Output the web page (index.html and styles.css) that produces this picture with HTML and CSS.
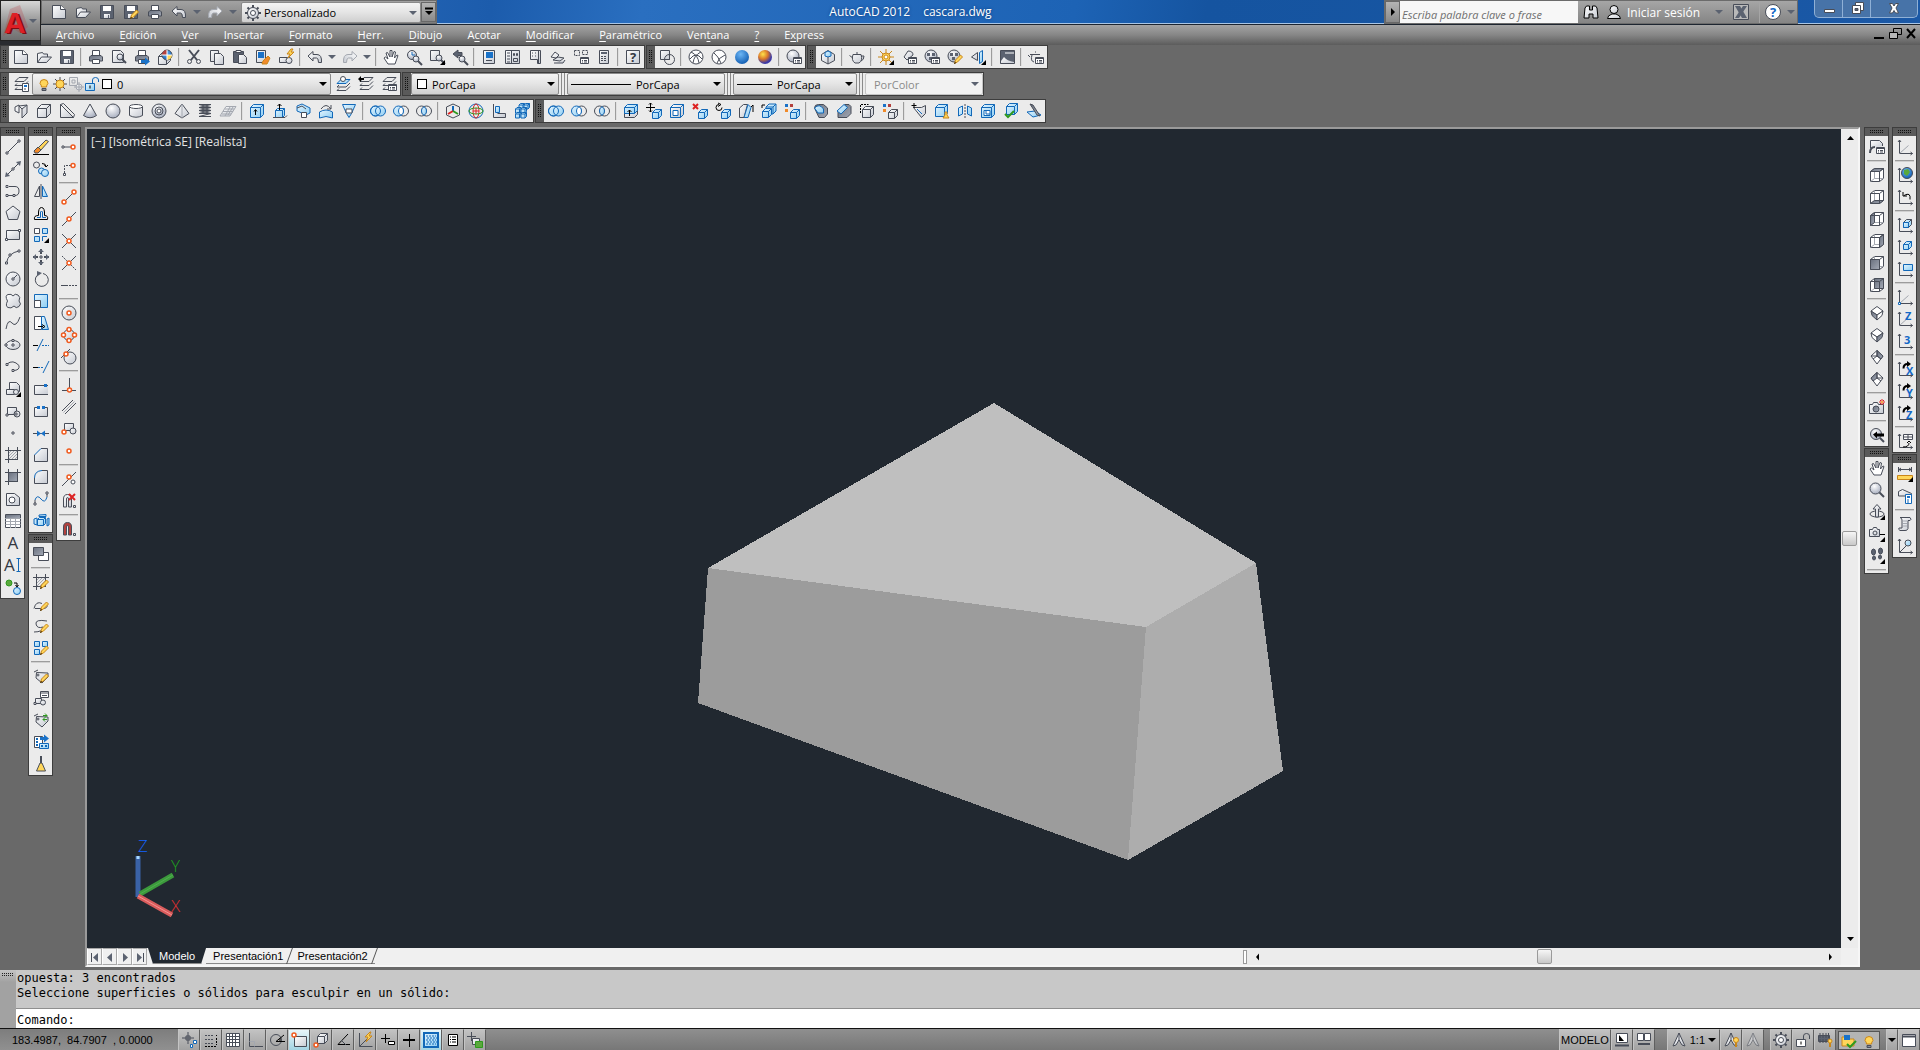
FILE: index.html
```html
<!DOCTYPE html>
<html lang="es">
<head>
  <meta charset="utf-8">
  <title>AutoCAD 2012 - cascara.dwg</title>
  <link rel="stylesheet" href="styles.css">
</head>
<body>
  <header class="top">
    <button class="app-button" aria-label="Menú de la aplicación">
      <svg class="logo" viewBox="0 0 28 38">
        <path class="logo-shade" d="M2 34l7-27 10-4 8 22-8 6-7-4z"/>
        <text class="logo-back" x="5" y="32">A</text>
        <text class="logo-front" x="3" y="31">A</text>
      </svg>
      <span data-icon="flecha"></span>
    </button>

    <div class="top-rows">
      <div class="title-bar">
        <div class="quick-access">
          <div class="tools" data-tools="nuevo abrir guardar guardarComo imprimir deshacer ^ rehacer ^"></div>
          <div class="combo workspace-combo">
            <span data-icon="engranaje"></span>
            <select aria-label="Espacio de trabajo"><option>Personalizado</option></select>
            <span data-icon="flecha"></span>
          </div>
          <button class="more" aria-label="Personalizar barra"><span data-icon="masFlecha"></span></button>
        </div>

        <h1 class="title"><span>AutoCAD 2012</span><span>cascara.dwg</span></h1>

        <div class="info-center">
          <button class="more" aria-label="Mostrar búsqueda"><span data-icon="flechaDer"></span></button>
          <input class="search" type="text" placeholder="Escriba palabra clave o frase" aria-label="Buscar">
          <button class="info-btn" aria-label="Buscar ahora"><span data-icon="prismaticos"></span></button>
          <button class="login"><span data-icon="persona"></span>Iniciar sesión<span class="push" data-icon="flecha"></span></button>
          <button class="info-btn exchange" aria-label="Exchange"><span data-icon="exchange"></span></button>
          <button class="info-btn" aria-label="Ayuda"><span data-icon="ayudaRedonda"></span></button>
          <button class="info-btn small" aria-label="Opciones de ayuda"><span data-icon="flecha"></span></button>
        </div>

        <div class="window-buttons">
          <button aria-label="Minimizar"><span data-icon="minimizar"></span></button>
          <button aria-label="Restaurar"><span data-icon="restaurar"></span></button>
          <button class="close" aria-label="Cerrar"><span data-icon="cerrar"></span></button>
        </div>
      </div>

      <nav class="menu-bar">
        <a href="#"><u>A</u>rchivo</a>
        <a href="#"><u>E</u>dición</a>
        <a href="#"><u>V</u>er</a>
        <a href="#"><u>I</u>nsertar</a>
        <a href="#"><u>F</u>ormato</a>
        <a href="#"><u>H</u>err.</a>
        <a href="#"><u>D</u>ibujo</a>
        <a href="#">A<u>c</u>otar</a>
        <a href="#"><u>M</u>odificar</a>
        <a href="#"><u>P</u>aramétrico</a>
        <a href="#">Ven<u>t</u>ana</a>
        <a href="#"><u>?</u></a>
        <a href="#">E<u>x</u>press</a>
        <div class="mdi-buttons">
          <button aria-label="Minimizar dibujo"><span data-icon="mdiMin"></span></button>
          <button aria-label="Restaurar dibujo"><span data-icon="mdiRest"></span></button>
          <button aria-label="Cerrar dibujo"><span data-icon="mdiCerrar"></span></button>
        </div>
      </nav>
    </div>
  </header>

  <div class="toolbars">
    <div class="toolbar-row">
      <div class="toolbar" data-tools="nuevo abrir guardar | imprimir vistaPrevia publicar web | cortar copiar pegar igualar editorBloques | deshacer ^ rehacer ^ | encuadre zoomReal zoomVentana zoomPrevio | propiedades designCenter paletas planos marcas calculadora | ayuda"></div>
      <div class="toolbar" data-tools="estilo2d | estructura3d oculto realista conceptual | gestionarEstilos"></div>
      <div class="toolbar" data-tools="ocultar | render | luz luces materiales mapeado espejo | entorno | ajustesRender"></div>
    </div>

    <div class="toolbar-row">
      <div class="toolbar layers" data-tools="capas">
        <div class="combo layer-combo">
          <span data-icon="bombilla"></span>
          <span data-icon="sol"></span>
          <span data-icon="ventanaCongelada"></span>
          <span data-icon="candado"></span>
          <i class="swatch"></i>
          <select aria-label="Capa actual"><option>0</option></select>
          <span data-icon="flechaNegra"></span>
        </div>
        <div class="tools" data-tools="capaActual capaPrevia estadosCapa"></div>
      </div>
      <div class="toolbar" data-tools="">
        <div class="combo color-combo">
          <i class="swatch"></i>
          <select aria-label="Color"><option>PorCapa</option></select>
          <span data-icon="flechaNegra"></span>
        </div>
        <i class="split"></i>
        <div class="combo linetype-combo">
          <i class="line"></i>
          <select aria-label="Tipo de línea"><option>PorCapa</option></select>
          <span data-icon="flechaNegra"></span>
        </div>
        <i class="split"></i>
        <div class="combo weight-combo">
          <i class="line short"></i>
          <select aria-label="Grosor de línea"><option>PorCapa</option></select>
          <span data-icon="flechaNegra"></span>
        </div>
        <i class="split"></i>
        <div class="combo plot-combo disabled">
          <select aria-label="Estilo de trazado" disabled><option>PorColor</option></select>
          <span data-icon="flecha"></span>
        </div>
      </div>
    </div>

    <div class="toolbar-row">
      <div class="toolbar" data-tools="polisolido prisma cuna cono esfera cilindro toroide piramide helice superficie | extrusion pulsarTirar barrido revolucion solevacion | union diferencia interseccion | mover3d girar3d alinear3d matriz3d"></div>
      <div class="toolbar" data-tools="union diferencia interseccion | extruirCaras moverCaras desfasarCaras borrarCaras girarCaras inclinarCaras copiarCaras colorearCaras | empalmeArista chaflanArista copiarAristas colorearAristas | estampar limpiar separar funda comprobar seccion"></div>
    </div>
  </div>

  <main class="workspace">
    <div class="dock">
      <div class="dock-column">
        <div class="toolbar vertical" data-tools="linea lineaAuxiliar polilinea poligono rectangulo arco circulo nube spline elipse arcoEliptico insertarBloque crearBloque punto sombreado degradado region tabla texto textoMultiple anadir"></div>
      </div>
      <div class="dock-column">
        <div class="toolbar vertical" data-tools="borrar copiarObjeto simetria desfase matriz desplazar girar escala estirar recortar alargar partirPunto partir juntar chaflan empalme fusionar descomponer"></div>
        <div class="toolbar vertical" data-tools="orden | editarSombreado editarPolilinea editarSpline editarMatriz | editarAtributo editarBloque sincronizar extraer pincel"></div>
      </div>
      <div class="dock-column">
        <div class="toolbar vertical" data-tools="rastreo desde | final medio interseccionRef ficticia extension | centro cuadrante tangente | perpendicular paralela insercion nodo | cercano ninguno | iman"></div>
      </div>
    </div>

    <section class="drawing">
      <div class="viewport">
        <div class="view-label">[−] [Isométrica SE] [Realista]</div>
        <svg class="model" viewBox="0 0 1754 819">
          <polygon fill="#bfbfbf" points="907,274 1169,434 1059,498 621,439"/>
          <polygon fill="#9c9c9c" points="621,439 1059,498 1041,731 611,574"/>
          <polygon fill="#adadad" points="1059,498 1169,434 1196,642 1041,731"/>
        </svg>
        <svg class="ucs" viewBox="0 0 60 90">
          <path stroke="#3a62a6" d="M11 63V22"/>
          <path stroke="#3c9a3c" d="M13 60l33-19"/>
          <path stroke="#4fae4f" stroke-width="1" d="M13 60l33-19"/>
          <path stroke="#d95c5c" d="M11 62l34 19"/>
          <path stroke="#f79090" stroke-width="1" d="M11 62l34 19"/>
          <path stroke="#a8d8ff" stroke-width="3" d="M11 22v3"/>
          <text fill="#1464ff" x="11" y="18">Z</text>
          <text fill="#1fa01f" x="44" y="38">Y</text>
          <text fill="#e03030" x="44" y="78">X</text>
        </svg>
      </div>
      <div class="scroll-v">
        <button aria-label="Desplazar arriba"><span data-icon="scrollArriba"></span></button>
        <i class="thumb"></i>
        <button aria-label="Desplazar abajo"><span data-icon="scrollAbajo"></span></button>
      </div>
      <div class="layout-strip">
        <div class="tab-nav">
          <button aria-label="Primera"><span data-icon="primera"></span></button>
          <button aria-label="Anterior"><span data-icon="anterior"></span></button>
          <button aria-label="Siguiente"><span data-icon="siguiente"></span></button>
          <button aria-label="Última"><span data-icon="ultima"></span></button>
        </div>
        <button class="tab active">Modelo</button>
        <button class="tab">Presentación1</button>
        <button class="tab">Presentación2</button>
        <div class="scroll-h">
          <i class="grip"></i>
          <button aria-label="Desplazar a la izquierda"><span data-icon="scrollIzq"></span></button>
          <i class="thumb"></i>
          <button aria-label="Desplazar a la derecha"><span data-icon="scrollDer"></span></button>
        </div>
      </div>
    </section>

    <div class="dock">
      <div class="dock-column">
        <div class="toolbar vertical" data-tools="vistas | superior inferior izquierda derecha frontal posterior | isoSO isoSE isoNE isoNO | camara | vistaAnterior"></div>
        <div class="toolbar vertical" data-tools="encuadre lupa orbita ajustarCamara paseo |"></div>
      </div>
      <div class="dock-column">
        <div class="toolbar vertical" data-tools="scp | scpUniversal scpPrevio | scpCara scpObjeto scpVista | scpOrigen scpEjeZ scp3p | scpX scpY scpZ | scpAplicar"></div>
        <div class="toolbar vertical" data-tools="distancia area | lista localizar"></div>
      </div>
    </div>
  </main>

  <section class="command">
    <div class="command-grip"></div>
    <div class="command-body">
      <div class="history">
        <p>opuesta: 3 encontrados</p>
        <p>Seleccione superficies o sólidos para esculpir en un sólido:</p>
      </div>
      <div class="prompt">
        <label for="cmd">Comando:</label>
        <input id="cmd" type="text">
      </div>
    </div>
  </section>

  <footer class="status">
    <div class="coords">183.4987,&nbsp; 84.7907 &nbsp;, 0.0000</div>
    <div class="status-group" data-tools="inferir forzcursor rejilla orto polar refent refent3d rastreoRef scpDinamico entradaDinamica grosor transparencia propiedadesRapidas ciclo" data-on="refent transparencia"></div>
    <div class="status-group right">
      <button class="wide space">MODELO</button>
      <span class="tools" data-tools="modeloHoja vistasRapidas"></span>
      <i class="gap"></i>
      <button class="wide"><span data-icon="escalaAnot"></span>1:1<span data-icon="flechaNegra"></span></button>
      <span class="tools" data-tools="visibAnot autoAnot"></span>
      <i class="gap narrow"></i>
      <span class="tools" data-tools="engranaje candadoBarra aceleracion"></span>
      <span class="tray tools" data-tools="confianza bombilla"></span>
      <button class="tiny" aria-label="Menú de la barra"><span data-icon="flechaNegra"></span></button>
      <span class="tools" data-tools="limpiarPantalla"></span>
    </div>
  </footer>

  <svg class="defs" width="0" height="0">
    <defs>
      <linearGradient id="gray" x1="0" y1="0" x2="1" y2="1"><stop offset="0" stop-color="#fff"/><stop offset="1" stop-color="#c6cad2"/></linearGradient>
      <linearGradient id="dark" x1="0" y1="0" x2="1" y2="1"><stop offset="0" stop-color="#69707e"/><stop offset="1" stop-color="#a3a9b5"/></linearGradient>
      <linearGradient id="cyan" x1="0" y1="0" x2="1" y2="1"><stop offset="0" stop-color="#e4f5ff"/><stop offset="1" stop-color="#8ecdf2"/></linearGradient>
      <radialGradient id="ball" cx=".4" cy=".3" r=".7"><stop offset="0" stop-color="#fff"/><stop offset="1" stop-color="#a9b0c0"/></radialGradient>
      <radialGradient id="blueBall" cx=".4" cy=".3" r=".7"><stop offset="0" stop-color="#6cb6f5"/><stop offset="1" stop-color="#1460b4"/></radialGradient>
      <radialGradient id="warmBall" cx=".35" cy=".3" r=".8"><stop offset="0" stop-color="#ffe24a"/><stop offset=".45" stop-color="#d8762a"/><stop offset=".8" stop-color="#3b3aa8"/></radialGradient>
    </defs>
  </svg>
  <script src="icons.js"></script>
</body>
</html>
```
FILE: styles.css
```css
*, *::before, *::after {
  box-sizing: border-box;
}

body {
  margin: 0;
  height: 100vh;
  display: flex;
  flex-direction: column;
  overflow: hidden;
  background: #696969;
  color: #000;
  font-family: "Open Sans", "Noto Sans", sans-serif;
  font-size: 11px;
}

button, select, input {
  margin: 0;
  padding: 0;
  border: 0;
  background: none;
  color: inherit;
  font: inherit;
}

button {
  display: flex;
  align-items: center;
  justify-content: center;
}

a {
  color: inherit;
  text-decoration: none;
}

.defs {
  position: absolute;
}

/* icons */
[data-icon] {
  display: flex;
}

.icon {
  display: block;
  width: 16px;
  height: 16px;
  flex: none;
  overflow: visible;
  fill: none;
  stroke: #484d58;
  stroke-width: 1;
}

.icon.slim { width: 8px; }
.icon .f { fill: url(#gray); }
.icon .g { fill: url(#dark); }
.icon .c { fill: url(#cyan); }
.icon .w { fill: #fff; }
.icon .d { fill: #5b6270; }
.icon .k { fill: #000; }
.icon .y { fill: #ffd65a; }
.icon .r { fill: #b3403c; }
.icon .bf { fill: #1a72c8; }
.icon .of { fill: #f08a2a; }
.icon .gf { fill: #5aa83c; }
.icon .s { fill: #b9b9b9; }
.icon .ball { fill: url(#ball); }
.icon .bb { fill: url(#blueBall); }
.icon .wb { fill: url(#warmBall); }
.icon .b { stroke: #1268b8; }
.icon .o { stroke: #f05a1e; stroke-width: 1.5; }
.icon .oy { stroke: #c9861a; }
.icon .rs { stroke: #d22; }
.icon .gs { stroke: #2e9a1e; }
.icon .l { stroke: #a4a8b0; }
.icon .ks { stroke: #000; }
.icon .ws { stroke: #fff; }
.icon .t { stroke-width: 2; }
.icon .n { stroke: none; }
.icon .z { fill: none; }
.icon .dash { stroke-dasharray: 2 1; }
.icon text {
  stroke: none;
  fill: #333842;
  font-family: "Open Sans", sans-serif;
  font-size: 17px;
}
.icon text.sm { font-size: 11px; font-weight: 700; }
.icon text.blue { fill: #1268c8; }
.icon text.help { font-size: 13px; font-weight: 700; }

/* title and menu */
.top {
  display: flex;
  height: 45px;
  background: #2a2c30;
}

.app-button {
  width: 41px;
  height: 41px;
  border: 1px solid #222;
  background: linear-gradient(#d6d6d6, #8d8d8d 60%, #6f6f6f);
  justify-content: flex-start;
}

.logo {
  width: 28px;
  height: 38px;
  overflow: visible;
}

.logo text {
  font: 700 30px "Liberation Sans", sans-serif;
}

.logo-shade { fill: #b5343a; opacity: .25; }
.logo-back { fill: #7d0d12; }
.logo-front { fill: #de1f26; }

.top-rows {
  flex: 1;
  display: flex;
  flex-direction: column;
}

.title-bar {
  display: flex;
  height: 25px;
  padding-bottom: 1px;
  background: linear-gradient(100deg, #1a57a5, #2768b9 14%, #1c5cac 24%, #2a6fc0 32%, #1d63b5 55%, #1554a0 62%, #1a58a6);
  border-bottom: 1px solid #1d2530;
  box-shadow: inset 0 -1px #a9c6e6;
}

.quick-access {
  display: flex;
  height: 24px;
  padding: 1px 0 1px 5px;
  background: linear-gradient(#a2a2a2, #7d7d7d);
  border: 1px solid #6b6b6b;
}

.tools {
  display: flex;
  align-items: center;
}

.quick-access .tool {
  width: 24px;
}

.quick-access .tool.slim {
  width: 12px;
}

.more {
  width: 15px;
  border: 1px solid #686868;
  background: linear-gradient(#b4b4b4, #8a8a8a);
}

.title {
  flex: 1;
  display: flex;
  justify-content: center;
  align-items: center;
  gap: 13px;
  margin: 0;
  color: #fff;
  font-size: 12px;
  font-weight: 400;
  text-shadow: 0 0 3px #0b3a78;
}

.info-center {
  display: flex;
  height: 24px;
  background: linear-gradient(#a6a6a6, #858585);
  border: 1px solid #6b6b6b;
  color: #fff;
  font-size: 12px;
}

.search {
  width: 178px;
  padding: 4px 2px 0;
  background: #f7f7f7;
  color: #444;
  font-size: 11px;
  font-style: italic;
}

.search::placeholder {
  color: #6e6e6e;
}

.info-btn {
  width: 25px;
}

.info-btn.small {
  width: 12px;
}

.login {
  width: 120px;
  justify-content: flex-start;
  gap: 5px;
  padding-left: 3px;
}

.push {
  margin-left: auto;
}

.info-btn.exchange {
  width: 37px;
  border-right: 1px solid #a5a5a5;
}

.window-buttons {
  display: flex;
  height: 18px;
  margin: 0 2px 0 16px;
  border: 1px solid #8fb0d6;
  border-top: 0;
  border-radius: 0 0 5px 5px;
  background: #4773a8;
}

.window-buttons button {
  width: 28px;
  padding-bottom: 2px;
  border-right: 1px solid #8fb0d6;
}

.window-buttons .close {
  width: 46px;
  border-right: 0;
}

.menu-bar {
  flex: 1;
  display: flex;
  align-items: center;
  gap: 25px;
  padding: 0 0 2px 15px;
  background: linear-gradient(#a4a4a4, #868686 50%, #5c5c5c);
  color: #fff;
  font-size: 11px;
}

.menu-bar u {
  text-underline-offset: 2px;
}

.mdi-buttons {
  display: flex;
  margin-left: auto;
  padding-right: 1px;
}

/* toolbars */
.toolbar-row {
  display: flex;
  gap: 1px;
  margin-bottom: 3px;
}

.toolbar {
  display: flex;
  align-items: center;
  height: 24px;
  border: 1px solid #3d3d3d;
  background: #ebebeb;
}

.toolbar::before {
  content: "";
  align-self: stretch;
  width: 8px;
  padding: 4px 2px;
  background: conic-gradient(at 1px 1px, transparent 75%, #111 0) 0 0 / 2px 2px content-box;
  background-color: #5a5a5a;
  background-clip: content-box;
  box-shadow: inset 0 0 0 4px #5a5a5a;
}

.tool {
  width: 23px;
  height: 22px;
  flex: none;
}

.tool.slim {
  width: 12px;
}

.sep {
  width: 2px;
  height: 18px;
  margin: 0 2px;
  background: #9c9c9c;
  border-right: 1px solid #e0e0e0;
}

.toolbar.vertical {
  flex-direction: column;
  width: 25px;
  height: auto;
}

.toolbar.vertical::before {
  width: auto;
  height: 8px;
  padding: 2px 5px;
}

/* solid plate behind the grip dots */
.toolbar::before,
.toolbar.vertical::before {
  box-shadow: none;
  background:
    conic-gradient(at 1px 1px, transparent 75%, #111 0) 0 0 / 2px 2px content-box content-box,
    linear-gradient(#5a5a5a, #5a5a5a) border-box;
}

.vertical .sep {
  width: 19px;
  height: 2px;
  margin: 2px 0;
  border-right: 0;
  border-bottom: 1px solid #d0d0d0;
}

/* drop-down lists */
.combo {
  display: flex;
  align-items: center;
  height: 22px;
  padding: 0 3px;
  border: 1px solid #8a8a8a;
  border-radius: 2px;
  background: linear-gradient(#f4f4f4, #e4e4e4 50%, #cfcfcf);
}

.combo select {
  flex: 1;
  min-width: 0;
  appearance: none;
}

.combo.disabled {
  background: #f2f2f2;
  border-color: #c4c4c4;
  color: #8a8a8a;
}

.combo.disabled select {
  opacity: 1;
}

.swatch {
  width: 10px;
  height: 10px;
  margin: 0 5px 0 2px;
  border: 1px solid #000;
  background: #fff;
}

.line {
  width: 60px;
  height: 1px;
  margin-right: 5px;
  background: #000;
}

.line.short {
  width: 35px;
}

.split {
  width: 4px;
  height: 22px;
  margin: 0 2px;
  border: 1px solid #8a8a8a;
  border-width: 0 1px;
}

.workspace-combo {
  width: 180px;
  height: 21px;
  margin-left: 2px;
  gap: 3px;
  font-size: 11px;
}

.layer-combo { width: 299px; }
.color-combo { width: 148px; }
.linetype-combo { width: 158px; }
.weight-combo { width: 124px; }
.plot-combo { width: 118px; padding-left: 8px; }

/* workspace */
.workspace {
  flex: 1;
  display: flex;
  min-height: 0;
  padding: 1px 3px 3px 0;
}

.dock {
  display: flex;
  gap: 3px;
}

.dock-column {
  display: flex;
  flex-direction: column;
  gap: 1px;
}

.drawing {
  flex: 1;
  display: grid;
  grid-template-columns: 1fr 17px;
  grid-template-rows: 1fr 17px;
  margin: 0 4px;
  border: 2px solid #f6f6f6;
  border-top-color: #9a9a9a;
  border-left-color: #9a9a9a;
  background: #f0f0f0;
}

.viewport {
  position: relative;
  min-height: 0;
  overflow: hidden;
  background: #212830;
}

.model {
  display: block;
  width: 100%;
  height: 100%;
  shape-rendering: crispEdges;
}

.view-label {
  position: absolute;
  top: 4px;
  left: 4px;
  color: #e4e4e4;
  font-size: 12px;
}

.ucs {
  position: absolute;
  left: 40px;
  bottom: 24px;
  width: 60px;
  height: 90px;
  fill: none;
  stroke-width: 5;
}

.ucs text {
  font: 300 17px "Open Sans", sans-serif;
}

.scroll-v {
  display: flex;
  flex-direction: column;
  align-items: center;
  background: #ececec;
}

.scroll-v button {
  height: 18px;
}

.thumb {
  width: 15px;
  height: 15px;
  border: 1px solid #9a9a9a;
  border-radius: 2px;
  background: linear-gradient(#f6f6f6, #c9c9c9);
}

.scroll-v .thumb {
  margin-top: auto;
  margin-bottom: auto;
}

.layout-strip {
  grid-column: 1 / 3;
  display: flex;
  height: 17px;
  background: #f0f0f0;
  font-family: "Liberation Sans", Arial, sans-serif;
}

.tab-nav {
  display: flex;
}

.tab-nav button {
  width: 15px;
  border: 1px solid #a8a8a8;
  border-left-color: #fff;
}

.tab {
  height: 16px;
  padding: 0 7px;
  border-bottom: 1px solid #8a8a8a;
  position: relative;
}

.tab::after {
  content: "";
  position: absolute;
  right: 0;
  top: 0;
  width: 1px;
  height: 16px;
  background: #555;
  transform: skewX(-20deg);
}

.tab.active {
  margin-left: 1px;
  padding: 0 11px;
  background: #212830;
  color: #fff;
  clip-path: polygon(0 0, 100% 0, calc(100% - 5px) 100%, 5px 100%);
}

.scroll-h {
  display: flex;
  align-items: center;
  width: 598px;
  margin-left: auto;
  margin-right: 17px;
  background: #ececec;
}

.scroll-h button {
  width: 20px;
}

.scroll-h .thumb {
  margin-left: auto;
  margin-right: auto;
}

.grip {
  width: 4px;
  height: 14px;
  border: 1px solid #9a9a9a;
  background: #fff;
}

/* command line */
.command {
  display: flex;
  height: 58px;
  background: #a2a2a2;
  font-family: "DejaVu Sans Mono", monospace;
  font-size: 12px;
  line-height: 15px;
}

.command-grip {
  width: 16px;
  padding: 3px 2px;
  background: linear-gradient(#c4c4c4, #a2a2a2 12px);
}

.command-grip::before {
  content: "";
  display: block;
  height: 4px;
  background: conic-gradient(at 1px 1px, transparent 75%, #222 0) 0 0 / 2px 2px;
}

.command-body {
  flex: 1;
  display: flex;
  flex-direction: column;
  background: #fff;
}

.history {
  height: 41px;
  padding: 1px 1px 0;
  background: #c8c8c8;
  border-bottom: 1px solid #8f8f8f;
}

.history p {
  margin: 0;
}

.prompt {
  flex: 1;
  display: flex;
  align-items: center;
  padding: 4px 1px 0;
}

.prompt input {
  flex: 1;
  outline: 0;
}

/* status bar */
.status {
  display: flex;
  height: 22px;
  border-top: 1px solid #111;
  background: linear-gradient(#8f8f8f, #777);
  font-family: "Liberation Sans", Arial, sans-serif;
}

.coords {
  width: 178px;
  padding: 5px 0 0 12px;
  background: linear-gradient(#7d7d7d, #909090);
}

.status-group {
  display: flex;
}

.status-group.right {
  margin-left: auto;
}

.status-group button {
  width: 22px;
  height: 21px;
  border: 1px solid #c4c4c4;
  border-right-color: #5f5f5f;
  border-bottom: 0;
  background: linear-gradient(#c2c2c2, #a2a2a2);
}

.status-group .on {
  background: linear-gradient(#e8f6fa, #a3d3e2);
}

.status-group .wide {
  width: auto;
  padding: 0 3px;
  gap: 3px;
}

.status-group .space {
  padding: 0 1px;
}

.status-group .tiny {
  width: 12px;
}

.gap {
  width: 12px;
}

.gap.narrow {
  width: 6px;
}

.tray {
  margin: 2px 6px 0 2px;
  background: #b4b4b4;
  border: 1px solid #555;
}

.status-group .tray button {
  width: 20px;
  height: 18px;
  border: 0;
  background: none;
}
```
FILE: icons.js
```js
// drawing helpers, all icons live on a 16x16 grid
const p = (d, c = '') => `<path class="${c}" d="${d}"/>`;
const o = (x, y, r, c = '') => `<circle class="${c}" cx="${x}" cy="${y}" r="${r}"/>`;
const e = (x, y, rx, ry, c = '') => `<ellipse class="${c}" cx="${x}" cy="${y}" rx="${rx}" ry="${ry}"/>`;
const q = (x, y, c = 'w') => p(`M${x} ${y}h2v2h-2z`, c);
const t = (x, y, s, c = '') => `<text class="${c}" x="${x}" y="${y}">${s}</text>`;
const mirror = s => `<g transform="matrix(-1 0 0 1 16 0)">${s}</g>`;
const cube = (x, y, s, d, c) =>
  p(`M${x} ${y + d}l${d}-${d}h${s}v${s}l-${d} ${d}h-${s}z`, c) +
  p(`M${x} ${y + d}h${s}v${s}m0-${s}l${d}-${d}`, c + ' z');

const pencil = p('M7.5 14.5l1-3.5 5-5 2 2-5 5z', 'y oy') + p('M7 15l1-2 1 1z', 'k n');
const fly = p('M16 11v5h-5z', 'k n');
const list = p('M7.5 8.5h8v6h-8z', 'w') + p('M7.5 9.5h8M9 11.5h1M11 11.5h3M9 13h1M11 13h3');
const blueSmall = cube(6.5, 6.5, 6, 3, 'c b');
const node = (x, y) => o(x, y, 2, 'w o');
const axes = p('M2.5 1v13.5h13M1 3l1.5-2L4 3M13.5 13l2 1.5-2 1.5') + p('M2.5 14.5l9-8', 'l');
const axesBare = p('M2.5 1v13.5h13M1 3l1.5-2L4 3M13.5 13l2 1.5-2 1.5');
const turn = p('M6.5 7.5q0-4.5 4-4.5', 'ks t') + p('M10 0l4 3-4 3z', 'k n');
const magnet = c => p('M2.5 14V6q0-4.5 4-4.5t4 4.5v8h-3V6q0-1.5-1-1.5T5.5 6v8z', c) + p('M12.5 12.5h2v2h-2z');
const layers = p('M2 5.5l4-4h9l-4 4zM2 9.5l2-2M2 9.5h9l4-4M2 13.5l2-2M2 13.5h9l4-4');
const tag = p('M1 4l4-2M3.5 4.5L15 5v4l-6 6-6-5z', 'f') + o(5, 7, 1);
const page = p('M1.5 1.5h8.5l4.5 4v9h-13z', 'f') + p('M9.5 1.5v4h5', 'w');
const save = p('M1.5 1.5h13v13h-13z', 'd') + p('M4 2h8v5H4z', 'w n') + p('M5 10h6v4H5z', 'f n') + p('M9 11h1v3H9z', 'd n');
const printer = p('M4.5 6V1.5h7V6', 'w') + p('M3 6.5h10l1.5 1.5v4h-13V8z', 'g') + p('M4.5 10.5h7v4h-7z', 'w');
const back = 'M1 7l5-4.500v3h4q5 0 4.500 8h-3q0-4.500-2-4.500H6v3z';
const iso = (a, b, c) => p('M8 1.5l6 4.5-6 4-6-4z', a) + p('M2 6l6 4v5L3 10.5z', b) + p('M14 6l-6 4v5l5-4.5z', c);
const view = face => p('M1.5 4.5l4-3h9v10l-4 3h-9z', 'w') + p('M5.5 1.5v10h9M5.5 11.5l-4 3', 'l') + face + p('M1.5 4.5h9v10m0-10l4-3', 'z');
const zoomGlass = (x, y) => p(`M${x + 2} ${y + 2}l4 4`, 't') + o(x, y, 3, 'ball');
const grid4 = c => [[1.5, 1.5], [9.5, 1.5], [1.5, 9.5]].map(([x, y]) => p(`M${x} ${y}h5v5h-5z`, c)).join('');
const annot = c => p('M8 1L2 14l3-1 3-5 3 5 3 1z', c) + p('M8 1v8');
const hatch = p('M3.5 0v16M12.5 0v13M0 3.5h16M0 12.5h13');
const stripes = p('M4 6l2-2M4 9l5-5M4 12l8-8M7 12l5-5M10 12l2-2', 'l');
const dots = p('M1 1h3v3H1z', 'bf n') + p('M6 1h3v3H6z', 'r n') + p('M1 6h3v3H1z', 'of n');

const icons = {
  nuevo: page,
  abrir: p('M1.5 13.5v-9l5-1 1 1.5h4v3', 'f') + p('M1.5 13.5l4-5.5h10l-5 5.5z', 'f'),
  guardar: save,
  guardarComo: save + pencil,
  imprimir: printer,
  deshacer: p(back, 'f'),
  rehacer: mirror(p(back, 'f l')),
  vistaPrevia: p('M1.5 1.5h8l3 3v9h-11z', 'f') + zoomGlass(9, 8),
  publicar: printer + p('M7 11h4V8.5l5 4-5 4V14H7z', 'bf n'),
  web: cube(1.5, 3.5, 8, 4, 'f') + o(10, 6, 5, 'bb') + p('M10 1a5 5 0 0 0-5 5h5z', 'r n') + p('M10 6h5a5 5 0 0 1-5 5z', 'y n') + p('M10 1v10M5 6h10', 'ws'),
  cortar: p('M3 1l8 10M13 1L5 11', 't') + o(3.5, 12.5, 2) + o(12.5, 12.5, 2),
  copiar: p('M1.5 1.5h8v11h-8z', 'f') + p('M5.5 4.5h6l3 3v8h-9z', 'f'),
  pegar: p('M1.5 2.5h10v11h-10z', 'd') + p('M4 1.5h5v2H4z', 'w') + p('M6.5 5.5h5l3 3v6h-8z', 'f'),
  igualar: p('M1.5 1.5h9v12h-9z', 'f') + p('M3 3h6v6H3z', 'bf n') + p('M8 12l5-5 2 2-3 6-5 0z', 'of oy'),
  editorBloques: p('M1.5 8.5h8v5h-8z', 'f') + o(11, 11.5, 3, 'f') + p('M13 0l-4 5h3l-2 4 6-6h-3l2-3z', 'y oy'),
  encuadre: p('M5 15L1 9l1.5-1L5 10 3 4l1.5-.5L7 8V1.5h2V8l2-5.5 1.5.5-1 6 2.5-3 1 .5-3 8.500z', 'w'),
  zoomReal: o(6, 6, 4.5, 'ball') + p('M6 3v3h3', 'b') + zoomGlass(10, 10),
  zoomVentana: p('M1.5 1.5h9v10h-9z', 'f') + zoomGlass(10, 9) + fly,
  zoomPrevio: p('M1 5l5-4v2.5h4v3H6V9z', 'd') + zoomGlass(10, 10),
  propiedades: p('M2.5 1.5h11v13h-11z', 'f') + p('M5 3h7v6H5z', 'bf n') + p('M5 11.5h6'),
  designCenter: p('M1.5 1.5h14v13h-14z', 'f') + p('M3 4h3M3 7h3M3 10h3M3 13h3M7.5 1.5v13') + p('M9.5 4.5h1v2h-1zM12.5 4.5h1v2h-1zM9.5 9.5h4v3h-4z'),
  paletas: p('M3.5 1.5h10v13h-3v-4h-7z', 'f') + p('M5 4h1M8 4h1M5 7h1M8 7h1M11.5 2v12'),
  planos: p('M1 8l4-5 4 3-3 3zM3 11l5-3 6 1-4 3zM4 14h9l2-3', 'f'),
  marcas: p('M1.5 1.5h5v5h-5zM9.5 1.5h5v4h-5z', 'dash') + list,
  calculadora: p('M3.5 1.5h9v13h-9z', 'f') + p('M5 3h6v2H5z', 'd n') + p('M5 7.5h6M5 9.5h6M5 11.5h6', 'dash'),
  ayuda: p('M1.5 1.5h13v13h-13z', 'f') + t(5, 13, '?', 'help'),
  estilo2d: p('M1.5 1.5h9v9h-9z', 'f') + o(10.5, 10.5, 5) + p('M5.5 10.5h5v-5'),
  estructura3d: o(8, 8, 7, 'w') + p('M3 3q7 3 8 11M13 3Q6 6 5 14M2 10Q8 2 14 10'),
  oculto: o(8, 8, 7, 'w') + p('M3 4q4 3 7 10M14 6Q7 9 6 14'),
  realista: o(8, 8, 7, 'bb n'),
  conceptual: o(8, 8, 7, 'wb n'),
  gestionarEstilos: o(7, 7, 6, 'ball') + list,
  ocultar: p('M8 1.5l6.5 4v6L8 15l-6.5-3.5v-6z', 'f') + p('M5 3.5L8 2l3 1.5V7L8 8 5 7z', 'c b') + p('M8 8v7'),
  render: p('M4 5.5h8q2 6-2 8.5H6Q2 11.5 4 5.5zM4 9L.5 6.500M12 7h3q0 4-3 5M7 4h2', 'f'),
  luz: p('M8 0v16M0 8h16M2 2l12 12M14 2L2 14', 'oy') + o(8, 8, 4, 'y oy') + o(8, 8, 2, 'w oy') + fly,
  luces: p('M3 8l4-6q5 0 5 4l-6 5z', 'f') + list,
  materiales: o(7, 7, 6, 'ball') + p('M3 4h3v3H3zM8 4h3v3H8zM5 8h3v3H5z', 'd n') + list,
  mapeado: o(7, 7, 6, 'ball') + p('M3 4h3v3H3zM8 4h3v3H8zM5 8h3v3H5z', 'd n') + pencil,
  espejo: p('M7.5 3.5v8L1.5 8z', 'f') + p('M9.5 3.5l3-2v11l-3 2z', 'c b') + fly,
  entorno: p('M1.5 1.5h14v13h-14z', 'd') + p('M2 12l3-4q3 4 10 5v1H2z', 'f n') + p('M6 4h9', 'ws'),
  ajustesRender: p('M2 5.5h10M4 6q-2 6 2 7M2 8L0 6M7 3h1', 'f') + list,
  capas: layers + p('M9.5 7.5h6v8h-6z', 'w') + p('M11 9h3v2h-3z', 'bf n') + p('M11 13h3', 'dash'),
  capaActual: p('M2 7.5l4-4h9l-4 4z', 'c b') + p('M2 11l2-2M2 11h9l4-4M2 14.5l2-2M2 14.5h9l4-4') + o(8, 3, 2.5, 'w'),
  capaPrevia: layers + p('M0 3l3-3v2h3v2H3v2z', 'k n'),
  estadosCapa: layers + list,
  bombilla: p('M5.5 11q0-2-1.5-3.5a4 4 0 1 1 8 0Q10.5 9 10.5 11z', 'y oy') + p('M6 12.5h4v2H6z', 'g'),
  sol: p('M8 1v14M1 8h14M3 3l10 10M13 3L3 13') + o(8, 8, 4, 'y oy'),
  ventanaCongelada: p('M1.5 1.5h8v8h-8zM4 4h3v3H4z', 'l') + o(11, 11, 3, 'l f') + p('M11 6v10M6 11h10', 'l'),
  candado: p('M1.5 7.5h9v7h-9z', 'c b') + p('M8.5 7V4q0-2.5 3-2.5t3 2.5v2', 'b') + p('M6 9.5v3', 'ks'),
  polisolido: p('M2 4l4-2v8l-4-2zM6 3l8-1v8l-5 5V6z', 'f') + p('M6 3l3 3 5-4'),
  prisma: cube(1.5, 1.5, 9, 4, 'f'),
  cuna: p('M1.5 1.5v13h13z', 'f') + p('M1.5 1.5l3-1 11 11-1 3'),
  cono: p('M8 1l6.5 11.5Q8 17 1.5 12.5z', 'ball'),
  esfera: o(8, 8, 7, 'ball'),
  cilindro: p('M1.5 3.5v9q6.5 3.5 13 0v-9', 'f') + e(8, 3.5, 6.5, 2, 'w'),
  toroide: o(8, 8, 7, 'ball') + o(8, 8, 4, 'ball') + o(8, 8, 2, 'w'),
  piramide: p('M8 1l7 9.5L8 15l-7-4.500z', 'f') + p('M8 1v14', 'l'),
  helice: p('M2 1.5h12L2 4.5h12L2 7.5h12L2 10.5h12l-12 3h12M2 1.5l12 3M2 4.5l12 3M2 7.5l12 3'),
  superficie: p('M6 3.5h10L10 13H0z', 'f l') + p('M3 8.500h10M10 4l-5 9M13 4L8 12M5 6h9M2 11h9', 'l'),
  extrusion: cube(1.5, 1.5, 10, 3, 'c b') + p('M6.5 12V7M5 8.5l1.5-2L8 8.5', 'ks'),
  pulsarTirar: cube(3.5, 5.5, 7, 2, 'c b') + p('M7.5 7V1M5.500 3l2-2 2 2', 'ks') + p('M1 14.5h12l2-2'),
  barrido: p('M2 3l5-2 8 4v5l-4 2-4-2-5-2z', 'c b') + p('M6.5 9.5h5v5h-5z', 'w') + p('M2 5l5-2 4 3'),
  revolucion: p('M1.5 9q6.5-4 13 0v6q-6.5-3-13 0z', 'c b') + p('M3 6q5-7 10 0M13 2v4H9'),
  solevacion: p('M1.5 1.5h13l-4 9-2.5 4-2.5-4z', 'c b') + p('M5 6h6v4H5z', 'w'),
  union: o(5.5, 8, 5, 'c b') + o(10.5, 8, 5, 'c b') + o(5.5, 8, 5, 'b'),
  diferencia: o(10.5, 8, 5) + o(5.5, 8, 5, 'c b') + p('M8 3.7a5 5 0 0 0 0 8.600 5 5 0 0 0 0-8.600z', 'w b'),
  interseccion: o(5.5, 8, 5) + o(10.5, 8, 5) + p('M8 3.7a5 5 0 0 0 0 8.600 5 5 0 0 0 0-8.600z', 'c b'),
  mover3d: p('M8 1l6.5 3v8L8 15l-6.5-3V4z') + p('M8 8V3', 'b t') + p('M8 8l-5 3', 'rs t') + p('M8 8l5 3', 'gs t'),
  girar3d: o(8, 8, 7, 'b') + e(8, 8, 3, 7, 'rs') + e(8, 8, 7, 3, 'gs') + p('M8 5v6M5 8h6', 'rs'),
  alinear3d: p('M2.5 1v13.5h12v-4h-8', 'f') + p('M4.5 3.5h4v6h-4z', 'c b'),
  matriz3d: cube(5, .5, 4, 1.5, 'c b') + cube(10, .5, 4, 1.5, 'c b') + cube(1.5, 4.5, 4, 1.5, 'c b') + cube(7, 4.5, 4, 1.5, 'c b') + cube(1.5, 9.5, 4, 1.5, 'c b') + cube(7, 9.5, 4, 1.5, 'c b'),
  extruirCaras: p('M1.5 10v4.5h10l3-3V7', 'f') + p('M1.5 4.5l3-3h10v6l-3 3h-10z', 'c b') + p('M1.5 4.5h10v6m0-6l3-3', 'b') + p('M6.5 13V7M4.5 9l2-2 2 2', 'ks'),
  moverCaras: p('M4.5 0v9M0 4.500h9M3 1.500L4.500 0 6 1.500M3 7.500L4.500 9 6 7.500', 'ks') + blueSmall,
  desfasarCaras: cube(1.5, 1.5, 10, 3, 'f b') + p('M4 7.5h5v5H4z', 'w b'),
  borrarCaras: p('M1 1l5 5M6 1L1 6', 'rs t') + blueSmall,
  girarCaras: p('M4 1.500a3 3 0 1 0 3 3M3 0l3 1.500-3 2', 'ks') + blueSmall,
  inclinarCaras: p('M1.5 14.5V5l4-3.5h4L6 14.5z', 'f') + p('M6 14.5l4-13 3 3-3 10z', 'c b') + p('M15 9V2M13 4l2-2', 'ks'),
  copiarCaras: cube(5, 1, 7, 3, 'c b') + cube(1.5, 5.5, 6, 3, 'c b') + p('M1 5V2h3', 'ks'),
  colorearCaras: dots + blueSmall,
  empalmeArista: p('M1.5 5q0-3.500 4-3.500h5l4 3.500v6l-3 3.5H6z', 'g') + p('M1.500 5q5-5 9 1v4H5z', 'c b'),
  chaflanArista: p('M2 8l7-6.500h4l2 2v7l-4 4H2z', 'g') + p('M1 8l7-6.500 3.500 3L5 11z', 'c b'),
  copiarAristas: cube(3.5, 3.5, 8, 3, 'f') + p('M1.5 10V1.5h8', 'dash ks'),
  colorearAristas: dots + cube(6.5, 6.5, 6, 3, 'f'),
  estampar: p('M2.5 4.5h8l4-2v8l-4 4z', 'f') + p('M3 0v5M.5 2.5h5', 'ks') + p('M6 6l5 5', 'b'),
  limpiar: cube(1.5, 1.5, 9, 3, 'c b') + p('M11 9h2v3l2 3H9l2-3z', 'y oy'),
  separar: p('M1.5 5l4-2v8l-4 2zM14.5 5l-4-2v8l4 2z', 'c b') + p('M8 1v14', 'dash'),
  funda: cube(1.5, 1.5, 10, 3, 'c b') + p('M4 7.5h6v5H4z', 'w b') + p('M6 8v3h4', 'b'),
  comprobar: cube(3.5, .5, 8, 3, 'c b') + p('M2 11l3 3 6-6', 'gs t'),
  seccion: p('M1 9l8-1 6 4-8 2z', 'c b') + p('M4 1l3 1 7 11-3-1z', 'g'),
  linea: p('M2 14L14 2') + q(1, 13) + q(13, 1),
  lineaAuxiliar: p('M2 14L14 2') + p('M0 16l1-5 4 4zM16 0l-5 1 4 4z', 'd n') + q(7, 7),
  polilinea: p('M2 12.5h7M4 3.5h6q4 0 4 4.5t-4 4.5') + q(1, 11.5) + q(8, 11.5) + q(1, 2.5),
  poligono: p('M8 1l7 5.5-2.5 8h-9L1 6.5z', 'f'),
  rectangulo: p('M1.5 3.5h13v9h-13z', 'f') + q(.5, 11.5) + q(13.5, 2.5),
  arco: p('M1.5 14Q3 4 14 2') + q(.5, 13) + q(4, 5) + q(13, 1),
  circulo: o(8, 8, 7, 'f') + p('M8 8l4-4') + q(7, 7),
  nube: p('M2.500 8Q-.5 2.500 3 1.500T8 3q2-3 5-1t1 6q3 3 0 5.500T9 13q-3 3-6 1.500T2.500 8z', 'f'),
  spline: p('M1 14Q3 3 7 8t8-6'),
  elipse: e(8, 8, 7, 4.5, 'f') + q(7, 2.5) + q(0, 7) + q(7, 7),
  arcoEliptico: p('M2 5q6-5 12 1.5 1 5-6 5') + q(1, 4.5) + q(7, 10.5),
  insertarBloque: p('M4.5 1.5h7l3 3v6h-10z', 'f') + p('M1.5 8.5h8v5h-8z', 'f') + o(11, 11, 2.5, 'f') + fly,
  crearBloque: p('M2.5 4.5h9v7h-9z', 'f') + o(12, 11, 3, 'f') + q(1, 11) + q(10, 10),
  punto: q(7, 7),
  sombreado: stripes + hatch,
  degradado: p('M3.5 3.5h9v9h-9z', 'g') + hatch,
  region: p('M1.5 2.5h8l5 4v8h-13z', 'f') + o(7, 9, 3, 'w'),
  tabla: p('M.5 1.5h15v13H.5z', 'w') + p('M1 2h14v3H1z', 'g n') + p('M0 5.500h16M.5 8.5h15M.5 11.5h15M5.5 5v10M10.500 5v10', 'l'),
  texto: t(2.5, 14, 'A'),
  textoMultiple: t(-1, 14, 'A') + p('M13.5 1.5v13M11.5 1.5h4M11.5 14.5h4', 'b'),
  anadir: o(4, 4, 3, 'gf gs') + o(12, 12, 3.5, 'c b') + p('M9 4h3v3M10.5 6L12 8l1.5-2', 'ks'),
  borrar: p('M5 9l8-8 2.500 1.500-8 9z', 'y') + p('M1 12l4-4 3 3-3 3H2z', 'of') + p('M0 15.5h16', 'ks'),
  copiarObjeto: o(3.5, 4, 3) + o(8.5, 10, 3, 'c b') + o(12, 12, 3.5, 'c b') + p('M9 2.5q4 0 4 3M11.5 4l1.5 2 2-2', 'ks'),
  simetria: p('M6.5 3v10.5h-5z') + p('M9.5 3v10.5h5z', 'c b') + p('M8 1v15'),
  desfase: p('M1.5 14.5q-1-4 4-4Q5 2.5 8.500 2.500t3 8q4 0 3 4z', 'ks') + p('M4 12.500h3.500V7q1-2 2 0v5.500H13', 'b'),
  matriz: p('M1.5 1.5h5v5h-5z', 'w') + p('M9.5 1.5h5v5h-5zM1.5 9.5h5v5h-5z', 'c b') + p('M9.5 14V9.5H14', 'b') + fly,
  desplazar: p('M8 0v5M8 11v5M0 8h5M11 8h5', 't') + p('M5 3l3-3 3 3zM5 13l3 3 3-3zM3 5L0 8l3 3zM13 5l3 3-3 3z', 'd n') + p('M7 7h2v2H7z'),
  girar: p('M10 2.5a6.500 6.500 0 1 1-6 2') + p('M4 0l5 2-5 3.500z', 'd n'),
  escala: p('M1.5 1.5h13v13h-13z', 'c b') + p('M1.5 7.5h6v7h-6z', 'w'),
  estirar: p('M1.5 1.5h7v13h-7z', 'w') + p('M8.5 1.5h3l4 13h-7z', 'c b') + p('M5 11.5h5M9 9.5l3 2-3 2', 'ks'),
  recortar: p('M0 8.5h5', 'ks') + p('M9 8.5h7', 'b dash') + p('M4 14L10 2', 'b'),
  alargar: p('M0 8.5h5', 'ks') + p('M5 8.5h5', 'b dash') + p('M10 14l6-12', 'b'),
  partirPunto: p('M15 4.5H1.5v9H15', 'f') + p('M11 3h3v3h-3z', 'bf n'),
  partir: p('M4 4.5H1.5v9h13v-9H12', 'f') + p('M4 3h3v3H4zM9 3h3v3H9z', 'bf n'),
  juntar: p('M0 8.5h16') + p('M4 5.5l4 3-4 3zM12 5.5l-4 3 4 3z', 'bf n'),
  chaflan: p('M1.5 8v6.5h13v-13H8', 'f') + p('M1.5 8L8 1.5', 'b'),
  empalme: p('M1.5 9v5.5h13v-13H9', 'f') + p('M1.5 9q0-7 7.5-7.5', 'b'),
  fusionar: p('M2 13V9M14 2v4') + p('M2 9q2-6 6-1t6-2', 'b') + q(1, 12) + q(13, 1),
  descomponer: cube(4.5, 4.5, 6, 2, 'c b') + p('M1 6l3-1v7l-3-1zM6 2l7-.5v2H6zM14 6l2-1v7l-2 1z', 'c b'),
  orden: p('M5.5 6.5h10v8h-10z', 'w') + p('M.5 1.5h10v8H.5z', 'g'),
  editarSombreado: stripes + hatch + pencil,
  editarPolilinea: p('M1 12.5q2-8 8-5M2 12.5h9q5-1 2-5', '') + pencil,
  editarSpline: p('M14 3Q2 1 3 6t7 3q0 5-9 5') + pencil,
  editarMatriz: grid4('c b') + pencil,
  editarAtributo: tag + pencil,
  editarBloque: p('M7.5 1.5h8v6h-8z', 'w') + p('M8 3h7M9 5.5h5') + p('M2.5 8.5h6v5h-6z', 'f') + o(10, 12.5, 2.5, 'f') + q(1, 12.5),
  sincronizar: tag + p('M10 3.5h4M12 1.5l2 2-2 2M14 7.5h-4M12 5.5l-2 2 2 2', 'gs'),
  extraer: p('M1.5 2.5h8v11h-8z', 'w') + p('M3 5h2M3 8h2M3 11h2', 'b t') + p('M7 3h4V.5l5 4-5 4V6H7z', 'bf n') + p('M6.5 9.5h9v5h-9z', 'c b') + p('M8 12h2M12 12h2', 'b t'),
  pincel: p('M8 0v7', 't') + p('M7 7h2l3.5 8h-9z', 'y'),
  rastreo: p('M2 8h8') + q(1, 7) + node(12, 8),
  desde: p('M3.5 12V4.5H10', 'dash') + q(2.5, 12.5) + node(12, 4.5),
  final: p('M3 13L13 3') + node(3, 13) + node(13, 3),
  medio: p('M1 15L15 1') + node(8, 8),
  interseccionRef: p('M1 1l14 14M15 1L1 15') + node(8, 8),
  ficticia: p('M1 1l14 14', 'dash') + p('M15 1L1 15') + node(8, 8),
  extension: p('M0 8.5h7') + p('M8 8.5h8', 'dash'),
  centro: o(8, 8, 7, 'f') + node(8, 8),
  cuadrante: o(8, 8, 5.5, 'f') + node(8, 2.5) + node(8, 13.5) + node(2.5, 8) + node(13.5, 8),
  tangente: o(9, 9, 6, 'f') + p('M0 9l9-9') + node(5, 5),
  perpendicular: p('M8.5 1v12M1 13.5h14') + node(8.5, 13),
  paralela: p('M1 12L12 1M4 15L15 4') + p('M2.5 13.5l11-11', 'l'),
  insercion: p('M3.5 2.5h9v7h-9z', 'f') + o(12, 10, 3, 'f') + node(3, 11),
  nodo: node(8, 8),
  cercano: p('M1 15L15 1') + node(8, 6) + o(12, 11, 2, 'w'),
  ninguno: magnet('f') + p('M8 1l6 6M14 1L8 7', 'rs t'),
  iman: magnet('r'),
  vistas: p('M1.5 9V1.5h9l3 3V7', 'f') + p('M1 14q0-6 5-6', 't') + list,
  superior: view(p('M1.5 4.5l4-3h9l-4 3z', 'g')),
  inferior: view(p('M1.5 14.5l4-3h9l-4 3z', 'g')),
  izquierda: view(p('M1.5 4.5l4-3v10l-4 3z', 'g')),
  derecha: view(p('M10.5 4.5l4-3v10l-4 3z', 'g')),
  frontal: view(p('M1.5 4.5h9v10h-9z', 'g')),
  posterior: view(p('M5.5 1.5h9v10h-9z', 'g')),
  isoSO: iso('w', 'g', 'w'),
  isoSE: iso('w', 'w', 'g'),
  isoNE: p('M8 1.5L14 7l-6 8-6-8z', 'w') + p('M8 1.5L14 7l-2 3-4-3z', 'g') + p('M8 1.5V7l-6 0M8 7l4 3M8 7l-4 3'),
  isoNO: p('M8 1.5L14 7l-6 8-6-8z', 'w') + p('M8 1.5L2 7l2 3 4-3z', 'g') + p('M8 1.5V7l6 0M8 7l4 3'),
  camara: p('M.5 5.5h3l1-2h4l1 2h5v9H.5z', 'f') + o(7, 10, 3, 'g') + p('M13 0v6M10 3h6M11 1l4 4M15 1l-4 4', 'rs') + o(13, 3, 1, 'y n'),
  vistaAnterior: o(7, 7, 5.5, 'ball') + p('M11 11l4 4', 't') + p('M4 7.5l4-3v2h7v3H8v2z', 'k n'),
  lupa: p('M10 10l5 5', 't') + o(6.5, 6.5, 5.5, 'ball'),
  orbita: e(8, 10, 7, 3) + p('M6.5 13V5H4l4-4.5L12 5H9.5v8z', 'f') + fly,
  ajustarCamara: p('M.5 3.5h3l1-2h3l1 2h2v7H.5z', 'f') + o(6, 7, 2) + p('M11 8.5h5', 'ks') + fly,
  paseo: e(4.5, 4, 2, 3, 'd') + e(5, 10, 1.5, 2, 'd') + e(11.5, 3, 2, 3, 'd') + e(11, 9, 1.5, 2, 'd') + fly,
  scp: axes,
  scpUniversal: axesBare + o(10, 6, 5.5, 'bb') + p('M7 3l4-1 2 3-3 4-3-2z', 'gf n'),
  scpPrevio: axesBare + p('M7 6.5q7-4 6 4M6 3v4h4', 'ks'),
  scpCara: axesBare + cube(6.5, 2.5, 5, 3, 'c') + p('M6.5 5.5h5v5h-5z', 'c b'),
  scpObjeto: axesBare + cube(6.5, 2.5, 5, 3, 'c b'),
  scpVista: axesBare + p('M6.5 3.5h9v6h-9z', 'c b'),
  scpOrigen: axes + p('M1.5 13.5h2v2h-2z', 'w b'),
  scpEjeZ: axes + t(8, 9, 'Z', 'sm blue'),
  scp3p: axesBare + t(7, 11, '3', 'sm blue'),
  scpX: axesBare + turn + t(9, 14, 'X', 'sm blue'),
  scpY: axesBare + turn + t(9, 14, 'Y', 'sm blue'),
  scpZ: axesBare + turn + t(9, 14, 'Z', 'sm blue'),
  scpAplicar: axesBare + p('M6.5 1.5h9v5h-9zM11 1.5v5M6.5 4h9', 'w') + p('M6 14q6 0 6-4M10 10l2-2 2 2', 'ks'),
  distancia: p('M1.5 1v5M14.5 1v5M1.5 3.5h13M4 2L2 3.5 4 5M12 2l2 1.5L12 5') + p('M.5 9.5h15v4H.5z', 'y oy') + fly,
  area: p('M1.5 8V3.5l4-2 9 4V8z', 'f') + p('M8.5 6.5h6v9h-6z', 'w b') + p('M10 8h3v2h-3z', 'bf n') + p('M10 12h3M10 14h3', 'b dash'),
  lista: p('M3 1.5h10q2 2 0 3h-2v8q-1 2.5-3 2H3q-2-1-1-2.5h3v-8q0-2-2-2.5z', 'f') + p('M6 5h4M6 7.5h4M6 10h4', 'l'),
  localizar: axesBare + p('M3 14l6-6') + o(11, 5, 3, 'c'),
  inferir: p('M7 0v12M1 6h12') + p('M5 4h4v4H5z') + p('M12.5 8.5h3v3h-3zM9.5 12.5h2v3h-2z', 'w b'),
  forzcursor: p('M2 3.5h8M2 7.5h8M2 11.5h8', 'dash') + p('M13.5 3v1M13.5 6v7M2 14.5h12', 'ks dash'),
  rejilla: p('M1.5 1.5h13v13h-13z', 'w') + p('M4.5 1v14M7.5 1v14M10.5 1v14M1 4.5h14M1 7.5h14M1 10.5h14'),
  orto: p('M2.5 1v13.5H16') + p('M2.5 9.5h5v5', 'l'),
  polar: o(7, 8, 5.5) + p('M15 3L7 9.5h9M11 6v4', 'ks'),
  refent: p('M3.5 4.5h12v10h-12z', 'f') + node(3, 3),
  refent3d: cube(4.5, 1.5, 7, 3, 'f') + node(3, 13),
  rastreoRef: p('M13 2L3 12.5h12', 'ks') + p('M6 8l5 5'),
  scpDinamico: p('M2.5 1v13.5h13M2.5 14.5l8-8') + p('M13 0L8 5h3L9 10l6-6h-3l2-4z', 'y oy'),
  entradaDinamica: p('M6.5 2v9M2 6.5h9', 'ks') + p('M9.5 9.5h6v3h-6z', 'w ks'),
  grosor: p('M8.500 2v13', 'ks') + p('M2 8h12', 'ks t'),
  transparencia: p('M1 1h14v14H1z', 'c b t') + p('M3 4h10M3 8h10M3 12h10M4 6h10M4 10h10', 'b dash'),
  propiedadesRapidas: p('M3.5 2.5h9v11h-9z', 'w ks') + p('M5 5h1M7 5h4M5 7.5h1M7 7.5h4M5 10h1M7 10h4', 'ks'),
  ciclo: p('M4.5 0v9M0 4.5h9') + p('M5.5 6.5h7v6h-7z', 'f') + p('M8.5 9.5h7v6h-7z', 'gf gs'),
  modeloHoja: p('M2.5 1.5h11v9h-11z', 'w') + p('M5 3v6h5z', 'k n') + p('M1 13.5h14', 't'),
  vistasRapidas: p('M1.5 1.5h6v7h-6zM8.5 1.5h6v7h-6z', 'w') + p('M2 12h12', 't'),
  escalaAnot: annot('f'),
  visibAnot: annot('f') + o(13, 8, 2.5, 'y oy') + p('M13 11v4', 'oy t'),
  autoAnot: `<g opacity=".5">${annot('f')}</g>`,
  engranaje: p('M8 0v16M0 8h16M2.500 2.500l11 11M13.500 2.500l-11 11', 't') + o(8, 8, 5.5, 'f') + o(8, 8, 2.5, 'w'),
  candadoBarra: p('M1.5 7.5h9v7h-9z', 'w') + p('M8.5 7V4q0-2.5 3-2.5t3 2.5v3') + p('M6 9.5v3', 'ks'),
  aceleracion: p('M1.5 3.5h11v6h-11z', 'd') + p('M3 1v10M6 1v10M9 1v10M11.5 1v5', 'dash') + o(13, 9, 2, 'y oy') + p('M13 11v4', 'oy t'),
  confianza: p('M1 4h6l1 2h5v7H1z', 'y oy') + p('M3 2h6v5H3z', 'bf n') + p('M6 11l3 3 6-6', 'gs t'),
  limpiarPantalla: p('M1.5 2.5h13v12h-13z', 'w') + p('M1.5 4.5h13', 't'),
  prismaticos: p('M1 14l1-10 1.500-2h3v4h3V2h3L14 4l1 10h-5v-4H6v4z', 'f ks'),
  persona: o(8, 5.5, 4, 'f ks') + p('M1.5 14.5q0-3 4.5-4.5h4q4.5 1.5 4.5 4.5z', 'f ks'),
  exchange: p('M.5.5h15v15H.5z', 's') + p('M2 2h5l7 12H9z', 'd n') + p('M14 2h-4L2 14h4z', 'd n'),
  ayudaRedonda: o(8, 8, 7.5, 'w') + t(5, 13, '?', 'help blue'),
  minimizar: p('M3.5 9.5h10v3h-10z', 'w'),
  restaurar: p('M6.5 2.5h8v8h-8z', 'w') + p('M3.5 5.5h8v8h-8z', 'w') + p('M6 8.5h3v2H6z', 'd'),
  cerrar: p('M3.5 3.5h3L8 6l1.5-2.5h3L10 8l2.5 5h-3L8 10.5 6.5 13h-3L6 8z', 'w'),
  mdiMin: p('M3 12h10', 't ks'),
  mdiRest: p('M6.5 2.5h8v6h-8z', 'ks') + p('M2.5 6.5h8v6h-8z', 's ks'),
  mdiCerrar: p('M4 3l8 9M12 3l-8 9', 't ks'),
  flechaDer: p('M6 4l4 4-4 4z', 'k n'),
  masFlecha: p('M4 4.5h8', 'ks t') + p('M4 7h8l-4 4z', 'k n'),
  flecha: p('M4 6h8l-4 4z', 'd n'),
  flechaNegra: p('M4 6h8l-4 4z', 'k n'),
  scrollArriba: p('M5 10h7l-3.5-4z', 'k n'),
  scrollAbajo: p('M5 6h7l-3.5 4z', 'k n'),
  scrollIzq: p('M10 4.5v7l-3-3.5z', 'k n'),
  scrollDer: p('M6 4.5v7l3-3.5z', 'k n'),
  primera: p('M4.5 4v9') + p('M11 4v9L6 8.5z', 'd n'),
  anterior: p('M10 4v9L5 8.5z', 'd n'),
  siguiente: p('M6 4v9l5-4.500z', 'd n'),
  ultima: p('M11.5 4v9') + p('M5 4v9l5-4.500z', 'd n')
};

function svg(name) {
  const slim = name.startsWith('flecha') || name === 'masFlecha';
  return `<svg class="icon${slim ? ' slim' : ''}" viewBox="${slim ? '4 0 8 16' : '0 0 16 16'}" aria-hidden="true">${icons[name]}</svg>`;
}

document.querySelectorAll('[data-icon]').forEach(el => {
  el.innerHTML = svg(el.dataset.icon);
});

document.querySelectorAll('[data-tools]').forEach(el => {
  const on = (el.dataset.on || '').split(' ');
  const html = el.dataset.tools.split(' ').filter(Boolean).map(name => {
    if (name === '|') return '<i class="sep"></i>';
    if (name === '^') return `<button class="tool slim" aria-label="Más opciones">${svg('flecha')}</button>`;
    return `<button class="tool${on.includes(name) ? ' on' : ''}" aria-label="${name}">${svg(name)}</button>`;
  }).join('');
  el.insertAdjacentHTML('afterbegin', html);
});
```
